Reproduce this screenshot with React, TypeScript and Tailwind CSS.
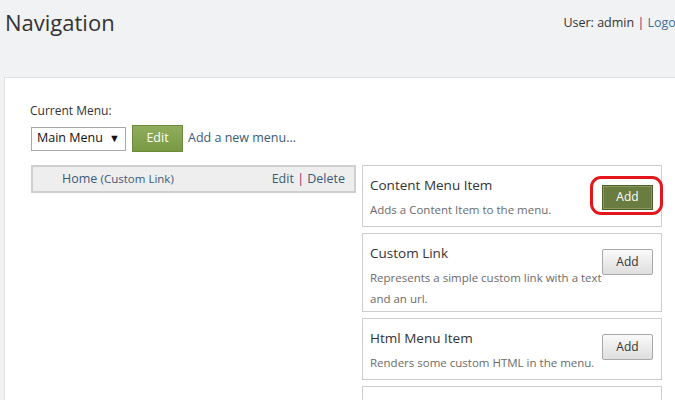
import React from "react";

const font = { fontFamily: '"Open Sans", "Noto Sans", sans-serif' };

function AddButton({ primary }: { primary?: boolean }) {
  if (primary) {
    return (
      <div className="relative shrink-0">
        <div className="absolute -left-[12px] -top-[7px] w-[73px] h-[39px] rounded-[11px] border-[3px] border-[#e4161b]" />
        <button className="w-[51px] h-[25px] border border-[#4f5f2c] bg-[#6a7c3f] text-white text-[12px] leading-none shadow-[inset_0_0_0_1px_#8a9a5c]">
          Add
        </button>
      </div>
    );
  }
  return (
    <button className="shrink-0 w-[51px] h-[26px] border border-[#a9a9a9] rounded-[2px] bg-gradient-to-b from-[#fafafa] to-[#dedede] text-[#333] text-[12px] leading-none">
      Add
    </button>
  );
}

function ItemBox({
  title,
  desc,
  primary,
  h,
}: {
  title: string;
  desc: string;
  primary?: boolean;
  h: string;
}) {
  return (
    <div className={`border border-[#cccccc] bg-white flex items-start pl-[7px] pr-[12px] ${h}`}>
      <div className="flex-1 pt-[9px]">
        <div className="text-[13.5px] text-[#333] leading-[20px]">{title}</div>
        <div className="text-[11.5px] text-[#6b6b6b] leading-[21px] mt-[4px] w-[232px]">{desc}</div>
      </div>
      <div className={primary ? "pt-[17px]" : "pt-[14px]"}>
        <AddButton primary={primary} />
      </div>
    </div>
  );
}

export default function App() {
  return (
    <div className="w-[675px] h-[400px] overflow-hidden bg-[#f1f2f4]" style={font}>
      <div className="w-[712px]">
        <div className="flex justify-between items-start h-[77px]">
          <h1 className="pl-[5px] pt-[6px] text-[22px] leading-[32px] text-[#333] font-normal">Navigation</h1>
          <div className="pt-[13px] pr-[24px] text-[12.5px] leading-[20px] text-[#333]">
            User: admin <span className="text-[#7a2a6f]">|</span>{" "}
            <span className="text-[#3d6f96]">Logout</span>
          </div>
        </div>
        <div className="ml-[4px] border-l border-t border-[#dfe0e2] bg-white h-[330px] pl-[25px] pt-[24px]">
          <div className="text-[12px] leading-[18px] text-[#333]">Current Menu:</div>
          <div className="flex items-center mt-[5px] h-[27px]">
            <div className="w-[95px] h-[24px] ml-[1px] border border-[#a9a9a9] bg-white flex items-center justify-between pl-[5px] pr-[5px] text-[12.5px] text-[#111]">
              <span>Main Menu</span>
              <span className="text-[11px] leading-none mt-[-3px]">▼</span>
            </div>
            <button className="ml-[6px] w-[51px] h-[27px] border border-[#6b8a3c] bg-gradient-to-b from-[#8fad5c] to-[#7a9a45] text-white text-[12.5px] leading-none">
              Edit
            </button>
            <span className="ml-[5px] text-[12.5px] text-[#3b5a77]">Add a new menu...</span>
          </div>
          <div className="flex items-start gap-[6px] mt-[13px] ml-[1px]">
            <div className="w-[325px] h-[28px] border-2 border-[#cfcfcf] bg-[#eeeeee] flex items-center justify-between pl-[29px] pr-[9px] text-[#3b5a77]">
              <div className="text-[12.5px]">
                Home <span className="text-[11.5px]">(Custom Link)</span>
              </div>
              <div className="text-[12.5px]">
                Edit <span className="text-[#7a2a6f]">|</span> Delete
              </div>
            </div>
            <div className="w-[300px] flex flex-col gap-[6px]">
              <ItemBox h="h-[62px]" title="Content Menu Item" desc="Adds a Content Item to the menu." primary />
              <ItemBox h="h-[79px]" title="Custom Link" desc="Represents a simple custom link with a text and an url." />
              <ItemBox h="h-[62px]" title="Html Menu Item" desc="Renders some custom HTML in the menu." />
              <div className="h-[40px] border border-[#cccccc] bg-white" />
            </div>
          </div>
        </div>
      </div>
    </div>
  );
}
